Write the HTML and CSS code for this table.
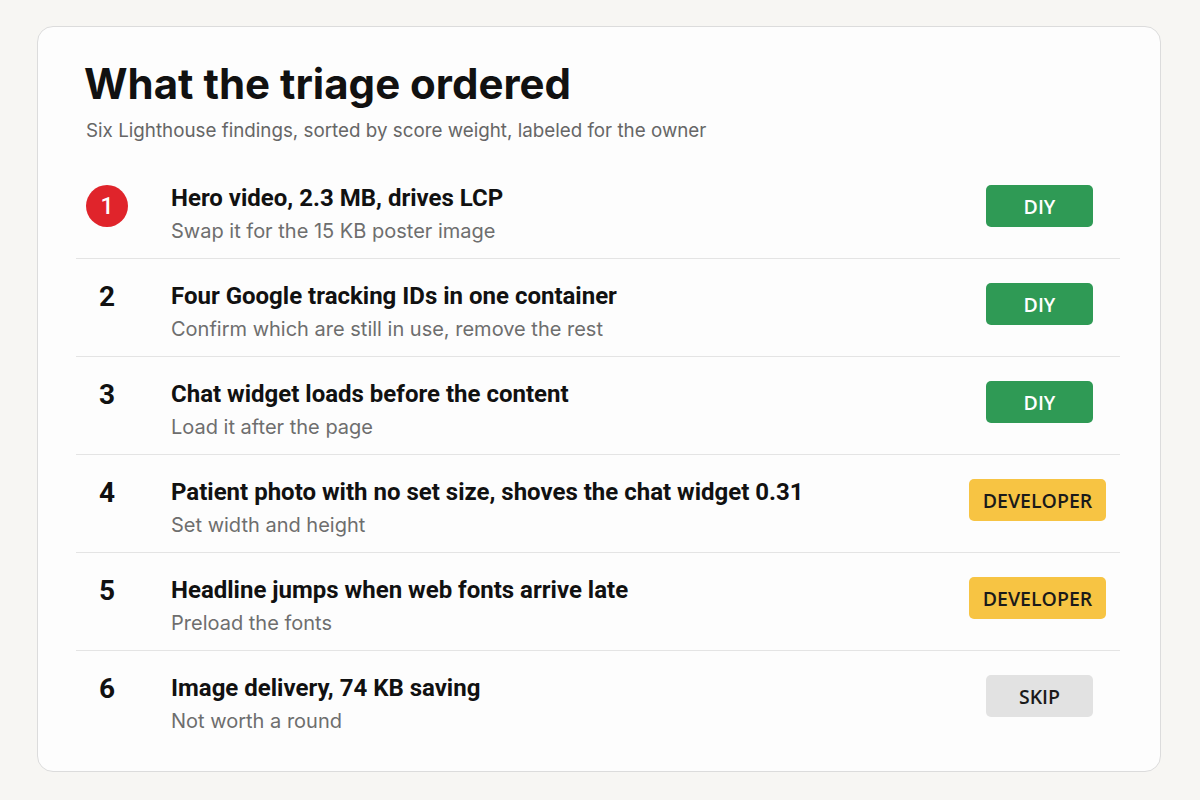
FILE: index.html
```html
<!DOCTYPE html>
<html>
<head>
<meta charset="utf-8">
<link rel="stylesheet" href="styles.css">
</head>
<body>
<main class="card">
  <header class="head">
    <h1 class="title">What the triage ordered</h1>
    <p class="lede">Six Lighthouse findings, sorted by score weight, labeled for the owner</p>
  </header>
  <ol class="list">
    <li class="row">
      <span class="num num-hot">1</span>
      <div class="text">
        <div class="item-title">Hero video, 2.3 MB, drives LCP</div>
        <div class="item-sub">Swap it for the 15 KB poster image</div>
      </div>
      <span class="badge badge-diy">DIY</span>
    </li>
    <li class="row">
      <span class="num">2</span>
      <div class="text">
        <div class="item-title">Four Google tracking IDs in one container</div>
        <div class="item-sub">Confirm which are still in use, remove the rest</div>
      </div>
      <span class="badge badge-diy">DIY</span>
    </li>
    <li class="row">
      <span class="num">3</span>
      <div class="text">
        <div class="item-title">Chat widget loads before the content</div>
        <div class="item-sub">Load it after the page</div>
      </div>
      <span class="badge badge-diy">DIY</span>
    </li>
    <li class="row">
      <span class="num">4</span>
      <div class="text">
        <div class="item-title">Patient photo with no set size, shoves the chat widget 0.31</div>
        <div class="item-sub">Set width and height</div>
      </div>
      <span class="badge badge-dev">DEVELOPER</span>
    </li>
    <li class="row">
      <span class="num">5</span>
      <div class="text">
        <div class="item-title">Headline jumps when web fonts arrive late</div>
        <div class="item-sub">Preload the fonts</div>
      </div>
      <span class="badge badge-dev">DEVELOPER</span>
    </li>
    <li class="row row-last">
      <span class="num">6</span>
      <div class="text">
        <div class="item-title">Image delivery, 74 KB saving</div>
        <div class="item-sub">Not worth a round</div>
      </div>
      <span class="badge badge-skip">SKIP</span>
    </li>
  </ol>
</main>
</body>
</html>
```

FILE: styles.css
```css
* { box-sizing: border-box; }

html, body {
  margin: 0;
  padding: 0;
  background: #f7f6f3;
}

body {
  width: 1200px;
  height: 800px;
  padding: 26px 39px 28px 37px;
  font-family: "Roboto", "Liberation Sans", sans-serif;
  color: #111;
}

.card {
  height: 746px;
  background: #fdfdfd;
  border: 1px solid #dcdcdc;
  border-radius: 16px;
  padding: 0 40px 0 38px;
}

.head {
  padding: 32px 0 0 10px;
}

.title {
  margin: 0 0 0 -2px;
  font-family: "Inter", "Liberation Sans", sans-serif;
  font-size: 42px;
  font-weight: 700;
  letter-spacing: 0;
  line-height: 50px;
  color: #111;
}

.lede {
  margin: 10px 0 0;
  font-family: "Inter", "Liberation Sans", sans-serif;
  font-size: 18.8px;
  line-height: 24px;
  color: #666;
}

.list {
  list-style: none;
  margin: 18px 0 0;
  padding: 0;
}

.row {
  display: flex;
  align-items: flex-start;
  height: 98px;
  border-bottom: 1px solid #e4e4e4;
  padding: 24px 0 0 10px;
}

.row-last { border-bottom: none; }

.num {
  width: 42px;
  height: 26px;
  display: flex;
  align-items: center;
  justify-content: center;
  font-size: 28px;
  font-weight: 700;
  color: #111;
  margin-right: 43px;
  flex: none;
}

.num-hot {
  height: 42px;
  border-radius: 50%;
  background: #e0242b;
  color: #fff;
  font-size: 23px;
  font-weight: 500;
}

.text {
  flex: 1;
  display: flex;
  flex-direction: column;
  gap: 8px;
}

.item-title {
  font-size: 24px;
  font-weight: 700;
  line-height: 26px;
  color: #111;
}

.item-sub {
  font-family: "Inter", "Liberation Sans", sans-serif;
  font-size: 20px;
  line-height: 24px;
  color: #6e6e6e;
}

.badge {
  flex: none;
  height: 42px;
  border-radius: 5px;
  display: flex;
  align-items: center;
  justify-content: center;
  font-family: "Open Sans", "Liberation Sans", sans-serif;
  font-size: 19.5px;
  font-weight: 600;
}

.badge-diy {
  width: 107px;
  background: #2f9a55;
  color: #fff;
  margin-right: 27px;
}

.badge-dev {
  width: 137px;
  background: #f7c443;
  color: #1a1a1a;
  margin-right: 14px;
}

.badge-skip {
  width: 107px;
  background: #e2e2e2;
  color: #1a1a1a;
  margin-right: 27px;
}
```
